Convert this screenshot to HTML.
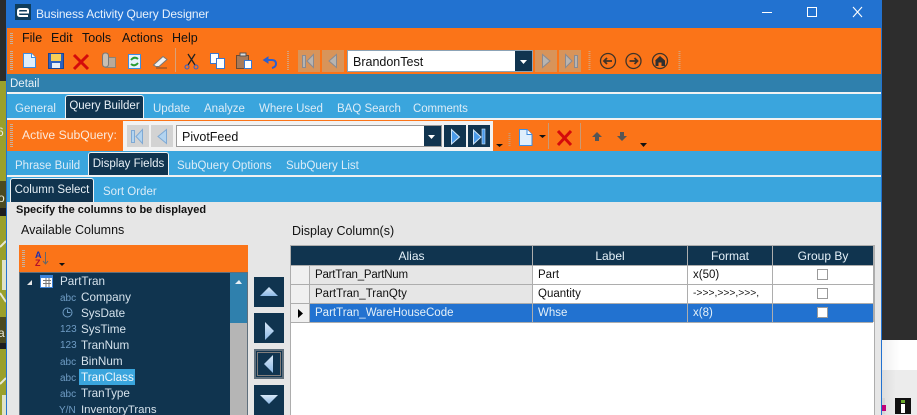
<!DOCTYPE html>
<html><head><meta charset="utf-8"><style>
html,body{margin:0;padding:0;width:917px;height:415px;overflow:hidden;background:#2d2d2d}
body{position:relative;font-family:"Liberation Sans",sans-serif;font-size:12px}
div,span.t{position:absolute;white-space:nowrap}
svg{position:absolute;overflow:visible}
.w{color:#e4f0f8}
.k{color:#111}
.tab{color:#dcecf7;top:102px;font-size:11.500px;line-height:14px}
.at{background:#10344f;border:1px solid #f2f2f2;border-bottom:none;border-radius:3px 3px 0 0;color:#e8f0f6;box-sizing:border-box;text-align:center;font-size:11.500px}
.btn{background:#d8945a;width:22px;height:22px}
.lb{color:#d5e2ec;left:81px;font-size:11.700px;line-height:14px}
.ty{color:#6f9cc4;left:60px;font-size:10px;line-height:14px}
.side{left:254px;width:30px;height:30px;background:#10344f}
.cell{font-size:11.500px;line-height:14px}
.line{background:#adadad}
.cb{width:9px;height:9px;border:1px solid #9a9a9a;background:#fff;left:817px}
.grip{width:3px;background:repeating-linear-gradient(#c8b09c 0 1px,transparent 1px 2px)}
</style></head><body>
<!-- left desktop -->
<div style="left:0;top:0;width:7px;height:415px;background:#9aa02c"></div>
<div style="left:0;top:0;width:7px;height:81px;background:#2b2b2b"></div>
<div style="left:0;top:181px;width:6px;height:27px;background:#4b4a20"></div>
<div style="left:0;top:208px;width:6px;height:8px;background:#1e1e1e"></div>
<div style="left:0;top:317px;width:6px;height:26px;background:#4b4a20"></div>
<div style="left:0;top:343px;width:6px;height:6px;background:#1e1e1e"></div>
<div style="left:2px;top:260px;width:4px;height:30px;background:#dfe2c8"></div>
<div style="left:2px;top:395px;width:4px;height:20px;background:#dfe2c8"></div>
<svg style="left:0;top:0" width="6" height="415"><path d="M0 247L6 241M0 293L6 302M0 384L6 378" stroke="#e6e8d4" stroke-width="2"/></svg>
<div style="left:0;top:0;width:6px;height:415px;overflow:hidden">
<div style="left:-3px;top:125px;font-size:12px;line-height:14px;color:#e8e8d8">6</div>
<div style="left:-2px;top:191px;font-size:12px;line-height:14px;color:#e8e8d8">o</div>
<div style="left:-2px;top:326px;font-size:12px;line-height:14px;color:#e8e8d8">a</div>
</div>
<!-- right desktop -->
<div style="left:882px;top:0;width:35px;height:340px;background:#2d2d2d"></div>
<div style="left:882px;top:340px;width:35px;height:30px;background:linear-gradient(90deg,#f0f0f0,#fff 50%)"></div>
<div style="left:882px;top:370px;width:35px;height:45px;background:linear-gradient(90deg,#ddd,#ececec 40%)"></div>
<div style="left:882px;top:398px;width:3px;height:16px;background:#d5d5d5"></div>
<div style="left:882px;top:405px;width:4px;height:6px;background:#c0007a"></div>
<div style="left:895px;top:398px;width:16px;height:16px;background:#111"></div>
<div style="left:901px;top:400px;width:4px;height:3px;background:#6aa82a"></div>
<div style="left:901px;top:404px;width:4px;height:9px;background:#fff"></div>
<!-- window -->
<div style="left:6px;top:0;width:876px;height:415px;background:#e6e6e6;border-left:1px solid #2272d0;border-right:1px solid #2272d0;box-sizing:border-box"></div>
<div style="left:6px;top:0;width:876px;height:28px;background:#2272d0"></div>
<div style="left:15px;top:4px;width:16px;height:16px;background:#0f3d5c"></div>
<svg style="left:15px;top:4px" width="16" height="16"><path d="M3 8.500H13V6.500Q13 5 11 5H5Q3 5 3 7V10Q3 12 5 12H13" fill="none" stroke="#fff" stroke-width="2"/></svg>
<div style="left:36px;top:6px;color:#e8f1fb;font-size:12px;letter-spacing:-.12px;line-height:16px">Business Activity Query Designer</div>
<svg style="left:762px;top:7px" width="100" height="12"><path d="M0 5.500H10" stroke="#fff" stroke-width="1"/><rect x="45.500" y="0.500" width="9" height="9" fill="none" stroke="#fff"/><path d="M91 0L100 10M100 0L91 10" stroke="#fff" stroke-width="1.100"/></svg>
<div style="left:7px;top:28px;width:874px;height:46px;background:#fb7418"></div>
<div class="grip" style="left:10px;top:33px;height:11px"></div>
<div class="grip" style="left:10px;top:51px;height:19px"></div>
<div class="k" style="left:22px;top:31px;line-height:15px;font-size:12.500px">File</div>
<div class="k" style="left:51px;top:31px;line-height:15px;font-size:12.500px">Edit</div>
<div class="k" style="left:82px;top:31px;line-height:15px;font-size:12.500px">Tools</div>
<div class="k" style="left:122px;top:31px;line-height:15px;font-size:12.500px">Actions</div>
<div class="k" style="left:172px;top:31px;line-height:15px;font-size:12.500px">Help</div>
<!-- toolbar icons -->
<svg style="left:0;top:0" width="700" height="74">
<path d="M23.500 53.500H31.500L35.500 57.500V67.500H23.500Z" fill="#dfeffc" stroke="#3e8de0"/>
<path d="M31.500 53.500V57.500H35.500" fill="#fff" stroke="#3e8de0"/>
<rect x="48.500" y="53.500" width="15" height="15" fill="#2d62c0" stroke="#1c4590"/><rect x="51" y="54" width="10" height="7" fill="#f6cf58"/><rect x="52" y="63" width="8" height="5" fill="#e8eef5"/>
<path d="M74 55L88 69M88 55L74 69" stroke="#d40b0b" stroke-width="3"/>
<rect x="105.500" y="57.500" width="10" height="10" fill="#b9aa9a" stroke="#8e8274"/><path d="M102.500 56Q102.500 53 105.500 53Q108.500 53 108.500 56V64Q108.500 67 105.500 67Q102.500 67 102.500 64Z" fill="#c9bfb2" stroke="#777"/>
<rect x="128.500" y="54.500" width="12" height="14" fill="#e8f2fb" stroke="#3e8de0"/><path d="M131 60Q134.500 56 138 59M138 63Q134.500 67 131 64" fill="none" stroke="#2a9c35" stroke-width="2"/>
<path d="M153.500 65L163 56.500L167 59.500L159 66.500H156Z" fill="#f2f2f2" stroke="#777"/><path d="M156 68H167" stroke="#7b4a2a"/>
<path d="M175.500 48V72" stroke="#d8a279"/>
<path d="M188 54L195 65M195 54L188 65" stroke="#222" stroke-width="1.300"/><circle cx="187" cy="67" r="2" fill="none" stroke="#2b5fd0"/><circle cx="196" cy="67" r="2" fill="none" stroke="#2b5fd0"/>
<rect x="210.500" y="53.500" width="8" height="10" fill="#fff" stroke="#3a78d0"/><rect x="216.500" y="58.500" width="8" height="10" fill="#fff" stroke="#3a78d0"/>
<rect x="236.500" y="55.500" width="12" height="13" fill="#a97a58" stroke="#6b4a33"/><rect x="240" y="53" width="6" height="3" fill="#ddd" stroke="#555"/><rect x="244.500" y="60.500" width="7" height="8" fill="#fff" stroke="#3a78d0"/>
<path d="M265 60H272Q276 60 276 64Q276 67 272 68" fill="none" stroke="#2b5fd0" stroke-width="2"/><path d="M263.500 60L268 57V63Z" fill="#2b5fd0" stroke="#2b5fd0"/>
<path d="M288 51V70" stroke="#d8a279" stroke-width="2" stroke-dasharray="1 1"/>
<path d="M589.500 51V70" stroke="#d8a279" stroke-width="2" stroke-dasharray="1 1"/>
<path d="M679.500 51V70" stroke="#d8a279" stroke-width="2" stroke-dasharray="1 1"/>
<g fill="none" stroke="#3f3328" stroke-width="1.300"><circle cx="608" cy="61" r="7.500"/><circle cx="633.500" cy="61" r="7.500"/><circle cx="660" cy="61" r="7.500"/></g>
<path d="M612 61H604M607 58L604 61L607 64M629.500 61H637.500M634.500 58L637.500 61L634.500 64" fill="none" stroke="#3f3328" stroke-width="1.800"/>
<path d="M655 60.500L660 56L665 60.500V66H661.500V62.500H658.500V66H655.500V60.500Z" fill="#2f2f2f"/>
</svg>
<div class="btn" style="left:298px;top:50px"></div><div class="btn" style="left:322px;top:50px"></div><div class="btn" style="left:535px;top:50px"></div><div class="btn" style="left:559px;top:50px"></div>
<svg style="left:0;top:0" width="700" height="74">
<g fill="#b8b4b0" stroke="#8a8a90"><rect x="302.500" y="55.500" width="3" height="12"/><path d="M313.500 54.500V67.500L307 61Z"/><path d="M336.500 54.500V67.500L329 61Z"/><path d="M542.500 54.500V67.500L550 61Z"/><path d="M565.500 54.500V67.500L572 61Z"/><rect x="574.500" y="55.500" width="3" height="12"/></g>
</svg>
<div style="left:347px;top:50px;width:186px;height:22px;background:#fff;border:1px solid #8ca3b6;box-sizing:border-box"></div>
<div style="left:353px;top:55px;font-size:12.500px;line-height:15px;color:#111">BrandonTest</div>
<div style="left:515px;top:51px;width:17px;height:20px;background:#10344f"></div>
<svg style="left:520px;top:60px" width="8" height="4"><path d="M0 0H7L3.500 4Z" fill="#fff"/></svg>
<!-- detail -->
<div style="left:7px;top:74px;width:874px;height:18px;background:#2f80ad"></div>
<div style="left:10px;top:77px;color:#e8f1f7;line-height:14px;font-size:11.500px">Detail</div>
<div style="left:7px;top:92px;width:874px;height:2px;background:#f2f2f2"></div>
<div style="left:7px;top:94px;width:874px;height:24px;background:#3aa5dd"></div>
<div style="left:7px;top:118px;width:874px;height:2px;background:#f2f2f2"></div>
<div class="tab" style="left:15px">General</div>
<div class="at" style="left:65px;top:95px;width:79px;height:23px;line-height:20px">Query Builder</div>
<div class="tab" style="left:153px">Update</div>
<div class="tab" style="left:204px">Analyze</div>
<div class="tab" style="left:259px">Where Used</div>
<div class="tab" style="left:337px">BAQ Search</div>
<div class="tab" style="left:413px;letter-spacing:-.1px">Comments</div>
<!-- subquery toolbar -->
<div style="left:7px;top:120px;width:874px;height:31px;background:#fb7418"></div>
<div style="left:123px;top:121px;width:370px;height:30px;background:#f2f2f2"></div>
<div class="grip" style="left:10px;top:124px;height:24px"></div>
<div style="left:22px;top:127px;color:#fbe9dc;font-size:12.200px;line-height:16px">Active SubQuery:</div>
<div style="left:127px;top:125px;width:22px;height:22px;background:#d3d3d3"></div>
<div style="left:151px;top:125px;width:22px;height:22px;background:#d3d3d3"></div>
<div style="left:176px;top:125px;width:266px;height:22px;background:#fff;border:1px solid #999;box-sizing:border-box"></div>
<div style="left:182px;top:130px;font-size:12.500px;line-height:15px;color:#111">PivotFeed</div>
<div style="left:424px;top:126px;width:17px;height:20px;background:#10344f"></div>
<div style="left:444px;top:125px;width:22px;height:22px;background:#10344f"></div>
<div style="left:468px;top:125px;width:22px;height:22px;background:#10344f"></div>
<svg style="left:0;top:115px" width="660" height="40">
<g fill="#b3d4f0" stroke="#7fa9d4"><rect x="131.500" y="15.500" width="3" height="12"/><path d="M142.500 14.500V28.500L136 21.500Z"/><path d="M166.500 14.500V28.500L158 21.500Z"/></g>
<path d="M428 20H435L431.500 24Z" fill="#fff"/>
<path d="M451.500 14.500V29L459.500 22Z" fill="#4a9ae8" stroke="#cfe6fa"/>
<path d="M473.500 15V29L481 22Z" fill="#4a9ae8" stroke="#cfe6fa"/><rect x="482" y="14" width="3" height="15" fill="#4a9ae8" stroke="#cfe6fa" stroke-width=".6"/>
<path d="M496 29H503L499.500 32Z" fill="#111"/>
<path d="M509.500 18V32" stroke="#c99a76" stroke-width="2" stroke-dasharray="1 1"/>
<path d="M519.500 14.500H527L532 19.500V30.500H519.500Z" fill="#dfeffc" stroke="#3e8de0"/><path d="M527 14.500V19.500H532" fill="#fff" stroke="#3e8de0"/>
<path d="M539 20H546L542.500 23Z" fill="#111"/>
<path d="M548.500 8V34M580.500 8V34" stroke="#c99a76"/>
<path d="M558 16L571 30M571 16L558 30" stroke="#d40b0b" stroke-width="3"/>
<path d="M597 17L602 22H599V26H595V22H592Z" fill="#555"/><path d="M622 26L627 21H624V17H620V21H617Z" fill="#555"/>
<path d="M640 28H647L643.500 32Z" fill="#111"/>
</svg>
<!-- sub tabs -->
<div style="left:7px;top:151px;width:874px;height:24px;background:#3aa5dd"></div>
<div style="left:7px;top:175px;width:874px;height:2px;background:#f2f2f2"></div>
<div style="left:7px;top:177px;width:874px;height:25px;background:#3aa5dd"></div>
<div class="tab" style="left:15px;top:159px">Phrase Build</div>
<div class="at" style="left:88px;top:152px;width:81px;height:23px;line-height:22px">Display Fields</div>
<div class="tab" style="left:177px;top:159px">SubQuery Options</div>
<div class="tab" style="left:286px;top:159px">SubQuery List</div>
<div class="at" style="left:10px;top:178px;width:84px;height:24px;line-height:22px">Column Select</div>
<div class="tab" style="left:103px;top:185px">Sort Order</div>
<!-- content -->
<div style="left:16px;top:204px;font-weight:bold;font-size:11px;line-height:13px;color:#111">Specify the columns to be displayed</div>
<div style="left:21px;top:223px;font-size:12.500px;line-height:15px;color:#111">Available Columns</div>
<div style="left:292px;top:224px;font-size:12.500px;line-height:15px;color:#111">Display Column(s)</div>
<!-- left panel -->
<div style="left:19px;top:245px;width:229px;height:27px;background:#fb7418"></div>
<div style="left:19px;top:272px;width:229px;height:143px;background:#10344f;border:1px solid #5f6f7c;border-bottom:none;box-sizing:border-box"></div>
<div class="grip" style="left:22px;top:250px;height:17px"></div>
<div style="left:35px;top:251px;color:#1f2fb0;font-size:9px;font-weight:bold;line-height:9px">A</div>
<div style="left:35px;top:259px;color:#b0102c;font-size:9px;font-weight:bold;line-height:9px">Z</div>
<svg style="left:0;top:245px" width="80" height="30"><path d="M45.500 7V18M43 16L45.500 19L48 16" fill="none" stroke="#666"/><path d="M59 18H65L62 21Z" fill="#111"/></svg>
<div style="left:230px;top:273px;width:17px;height:50px;background:#2f80ad"></div>
<div style="left:230px;top:323px;width:17px;height:92px;background:#b5b5b5"></div>
<svg style="left:0;top:270px" width="250" height="30"><path d="M235 14L239 10L242 14Z" fill="#e5eef5"/><path d="M27 15L32 10V15Z" fill="#e6e6e6"/><rect x="40.500" y="5.500" width="12" height="12" fill="#fff" stroke="#3b82d8"/><path d="M41 5.500H53V8H41Z" fill="#3b82d8"/><path d="M43 10.500H51M43 13.500H51M46 8V17M49 8V17" stroke="#777"/></svg>
<div class="lb" style="left:60px;top:275px">PartTran</div>
<div class="ty" style="top:292px">abc</div><div class="lb" style="top:291px">Company</div>
<svg style="left:62px;top:307px" width="11" height="11"><circle cx="5.500" cy="5.500" r="4.500" fill="none" stroke="#6f9cc4"/><path d="M5.500 2.500V5.500H8.500" fill="none" stroke="#6f9cc4"/></svg><div class="lb" style="top:307px">SysDate</div>
<div class="ty" style="top:323px">123</div><div class="lb" style="top:323px">SysTime</div>
<div class="ty" style="top:339px">123</div><div class="lb" style="top:339px">TranNum</div>
<div class="ty" style="top:356px">abc</div><div class="lb" style="top:355px">BinNum</div>
<div style="left:79px;top:369px;width:56px;height:16px;background:#3aa5dd"></div>
<div class="ty" style="top:372px">abc</div><div class="lb" style="top:371px;color:#eef6fb">TranClass</div>
<div class="ty" style="top:388px">abc</div><div class="lb" style="top:387px">TranType</div>
<div class="ty" style="left:59px;top:404px">Y/N</div><div class="lb" style="top:403px;font-size:11.400px">InventoryTrans</div>
<!-- side buttons -->
<div class="side" style="top:277px"></div><div class="side" style="top:313px"></div>
<div class="side" style="top:349px;box-sizing:border-box;border:2px solid #5f6f7c"></div><div class="side" style="top:385px"></div>
<svg style="left:254px;top:277px" width="30" height="138"><defs><linearGradient id="g" x1="0" y1="0" x2="0" y2="1"><stop offset="0" stop-color="#d9e9f8"/><stop offset="1" stop-color="#8db9e6"/></linearGradient></defs>
<path d="M6 19L15 10L24 19Z" fill="url(#g)"/><path d="M11 45V63L20 54Z" fill="url(#g)"/>
<rect x="3.500" y="75.500" width="23" height="23" fill="none" stroke="#f4c9a8" stroke-dasharray="1 1"/><path d="M19 78V96L10 87Z" fill="url(#g)"/>
<path d="M6 118H24L15 127Z" fill="url(#g)"/></svg>
<!-- grid -->
<div style="left:290px;top:245px;width:585px;height:170px;background:#fff;border:1px solid #adadad;border-bottom:none;box-sizing:border-box"></div>
<div style="left:291px;top:246px;width:582px;height:19px;background:#10344f"></div>
<div style="left:291px;top:266px;width:18px;height:18px;background:#f0f0f0"></div>
<div style="left:291px;top:285px;width:18px;height:18px;background:#f0f0f0"></div>
<div style="left:291px;top:304px;width:18px;height:18px;background:#f0f0f0"></div>
<div style="left:310px;top:266px;width:222px;height:18px;background:#e6e6e6"></div>
<div style="left:310px;top:285px;width:222px;height:18px;background:#e6e6e6"></div>
<div style="left:310px;top:304px;width:563px;height:18px;background:#2272d0"></div>
<div class="line" style="left:291px;top:265px;width:582px;height:1px"></div>
<div class="line" style="left:291px;top:284px;width:582px;height:1px"></div>
<div class="line" style="left:291px;top:303px;width:582px;height:1px"></div>
<div class="line" style="left:291px;top:322px;width:582px;height:1px"></div>
<div class="line" style="left:309px;top:265px;width:1px;height:57px"></div>
<div class="line" style="left:532px;top:246px;width:1px;height:76px"></div>
<div class="line" style="left:687px;top:246px;width:1px;height:76px"></div>
<div class="line" style="left:772px;top:246px;width:1px;height:76px"></div>
<div class="line" style="left:873px;top:246px;width:2px;height:76px"></div>
<div class="w cell" style="left:291px;width:241px;text-align:center;top:249px;font-size:12px">Alias</div>
<div class="w cell" style="left:533px;width:154px;text-align:center;top:249px;font-size:12px">Label</div>
<div class="w cell" style="left:688px;width:84px;text-align:center;top:249px;font-size:12px">Format</div>
<div class="w cell" style="left:773px;width:100px;text-align:center;top:249px;font-size:12px">Group By</div>
<div class="k cell" style="left:315px;top:268px;letter-spacing:-.2px">PartTran_PartNum</div>
<div class="k cell" style="left:538px;top:268px">Part</div>
<div class="k cell" style="left:693px;top:268px">x(50)</div>
<div class="k cell" style="left:315px;top:287px">PartTran_TranQty</div>
<div class="k cell" style="left:538px;top:287px">Quantity</div>
<div class="k cell" style="left:693px;top:287px;font-size:10.300px">-&gt;&gt;&gt;,&gt;&gt;&gt;,&gt;&gt;&gt;,</div>
<div class="w cell" style="left:315px;top:306px">PartTran_WareHouseCode</div>
<div class="w cell" style="left:538px;top:306px">Whse</div>
<div class="w cell" style="left:693px;top:306px">x(8)</div>
<div class="cb" style="top:269px"></div><div class="cb" style="top:288px"></div><div class="cb" style="top:307px"></div>
<svg style="left:297px;top:309px" width="8" height="10"><path d="M1 0V9L6 4.500Z" fill="#000"/></svg>
</body></html>
